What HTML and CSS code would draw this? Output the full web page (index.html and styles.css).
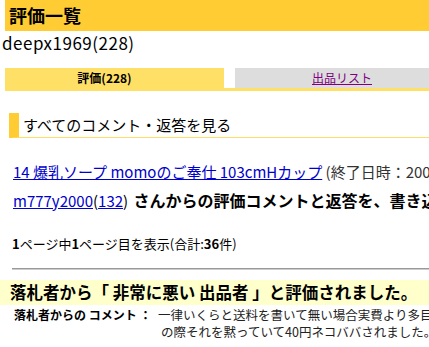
FILE: index.html
```html
<!DOCTYPE html>
<html lang="ja">
<head>
<meta charset="utf-8">
<title>評価一覧</title>
<link rel="stylesheet" href="styles.css">
</head>
<body>
<div class="page">
  <h1 class="title">評価一覧</h1>
  <div class="user">deepx1969(228)</div>
  <div class="tabs">
    <div class="tab tab-active">評価(228)</div>
    <div class="tab-gap"></div>
    <div class="tab tab-other"><a href="#" class="visited">出品リスト</a></div>
  </div>
  <h2 class="section">すべてのコメント・返答を見る</h2>
  <p class="item"><a href="#">14 爆乳ソープ momoのご奉仕 103cmHカップ</a> (終了日時：2009年 1月 1日 23時 15分)</p>
  <p class="from"><a href="#">m777y2000</a>(<a href="#">132</a>) <b class="from-text">さんからの評価コメントと返答を、書き込まれた順に表示しています。</b></p>
  <p class="pager"><b>1</b>ページ中<b>1</b>ページ目を表示(合計:<b>36</b>件)</p>
  <div class="rule"></div>
  <div class="rating">落札者から「 非常に悪い 出品者 」と評価されました。</div>
  <div class="comment">
    <div class="label">落札者からの コメント ：</div>
    <div class="text">
      <div class="line">一律いくらと送料を書いて無い場合実費より多目に請求されます。支払い</div>
      <div class="line line-2">の際それを黙っていて40円ネコババされました。(</div>
    </div>
  </div>
</div>
</body>
</html>
```
FILE: styles.css
```css
html, body {
  margin: 0;
  padding: 0;
  background: #ffffff;
  overflow: hidden;
}
body {
  font-family: "Noto Sans CJK JP", "Noto Sans", sans-serif;
  color: #000000;
}
.page {
  width: 900px;
  white-space: nowrap;
}
.title {
  margin: 0 0 0 5px;
  height: 31px;
  line-height: 31px;
  padding-left: 4px;
  background: #ffcc33;
  font-size: 18px;
  font-weight: bold;
}
.user {
  height: 24px;
  line-height: 24px;
  padding-left: 2px;
  font-size: 17px;
  letter-spacing: 0.5px;
}
.tabs {
  display: flex;
  margin: 13px 0 0 5px;
  border-bottom: 3px solid #ffe066;
  width: 444px;
}
.tab {
  flex: none;
  height: 20px;
  line-height: 20px;
  font-size: 12px;
  text-align: center;
  box-sizing: border-box;
}
.tab-active {
  width: 219px;
  background: #ffe066;
  font-weight: bold;
  padding-right: 20px;
}
.tab-gap {
  flex: none;
  width: 11px;
}
.tab-other {
  width: 214px;
  background: #dddddd;
}
.tab-other a {
  color: #800080;
}
.section {
  margin: 22px 0 0 9px;
  height: 24px;
  line-height: 24px;
  border-left: 10px solid #ffcc33;
  border-bottom: 1px solid #ffdd66;
  padding-left: 4px;
  font-size: 15px;
  font-weight: normal;
}
.item {
  margin: 24px 0 0 13px;
  height: 20px;
  line-height: 20px;
  font-size: 15px;
  color: #333333;
}
.item a, .from a {
  color: #0000cc;
}
.from {
  margin: 8px 0 0 13px;
  height: 20px;
  line-height: 20px;
  font-size: 15px;
}
.from-text {
  font-size: 16px;
  margin-left: 2px;
}
.pager {
  margin: 24px 0 0 12px;
  height: 20px;
  line-height: 20px;
  font-size: 13px;
}
.rule {
  margin: 14px 0 0 12px;
  border-top: 1px solid #999999;
  border-bottom: 1px solid #cccccc;
}
.rating {
  margin-top: 10px;
  padding-left: 10px;
  height: 25px;
  line-height: 25px;
  background: #ffffcc;
  font-size: 16.5px;
  font-weight: bold;
}
.comment {
  display: flex;
  padding-top: 1px;
}
.label {
  flex: none;
  height: 17px;
  line-height: 17px;
  font-size: 12px;
  font-weight: bold;
  margin-left: 14px;
  width: 144px;
}
.text {
  font-size: 12.5px;
  color: #222222;
}
.line {
  height: 17px;
  line-height: 17px;
}
.line-2 {
  padding-left: 3px;
}
```
